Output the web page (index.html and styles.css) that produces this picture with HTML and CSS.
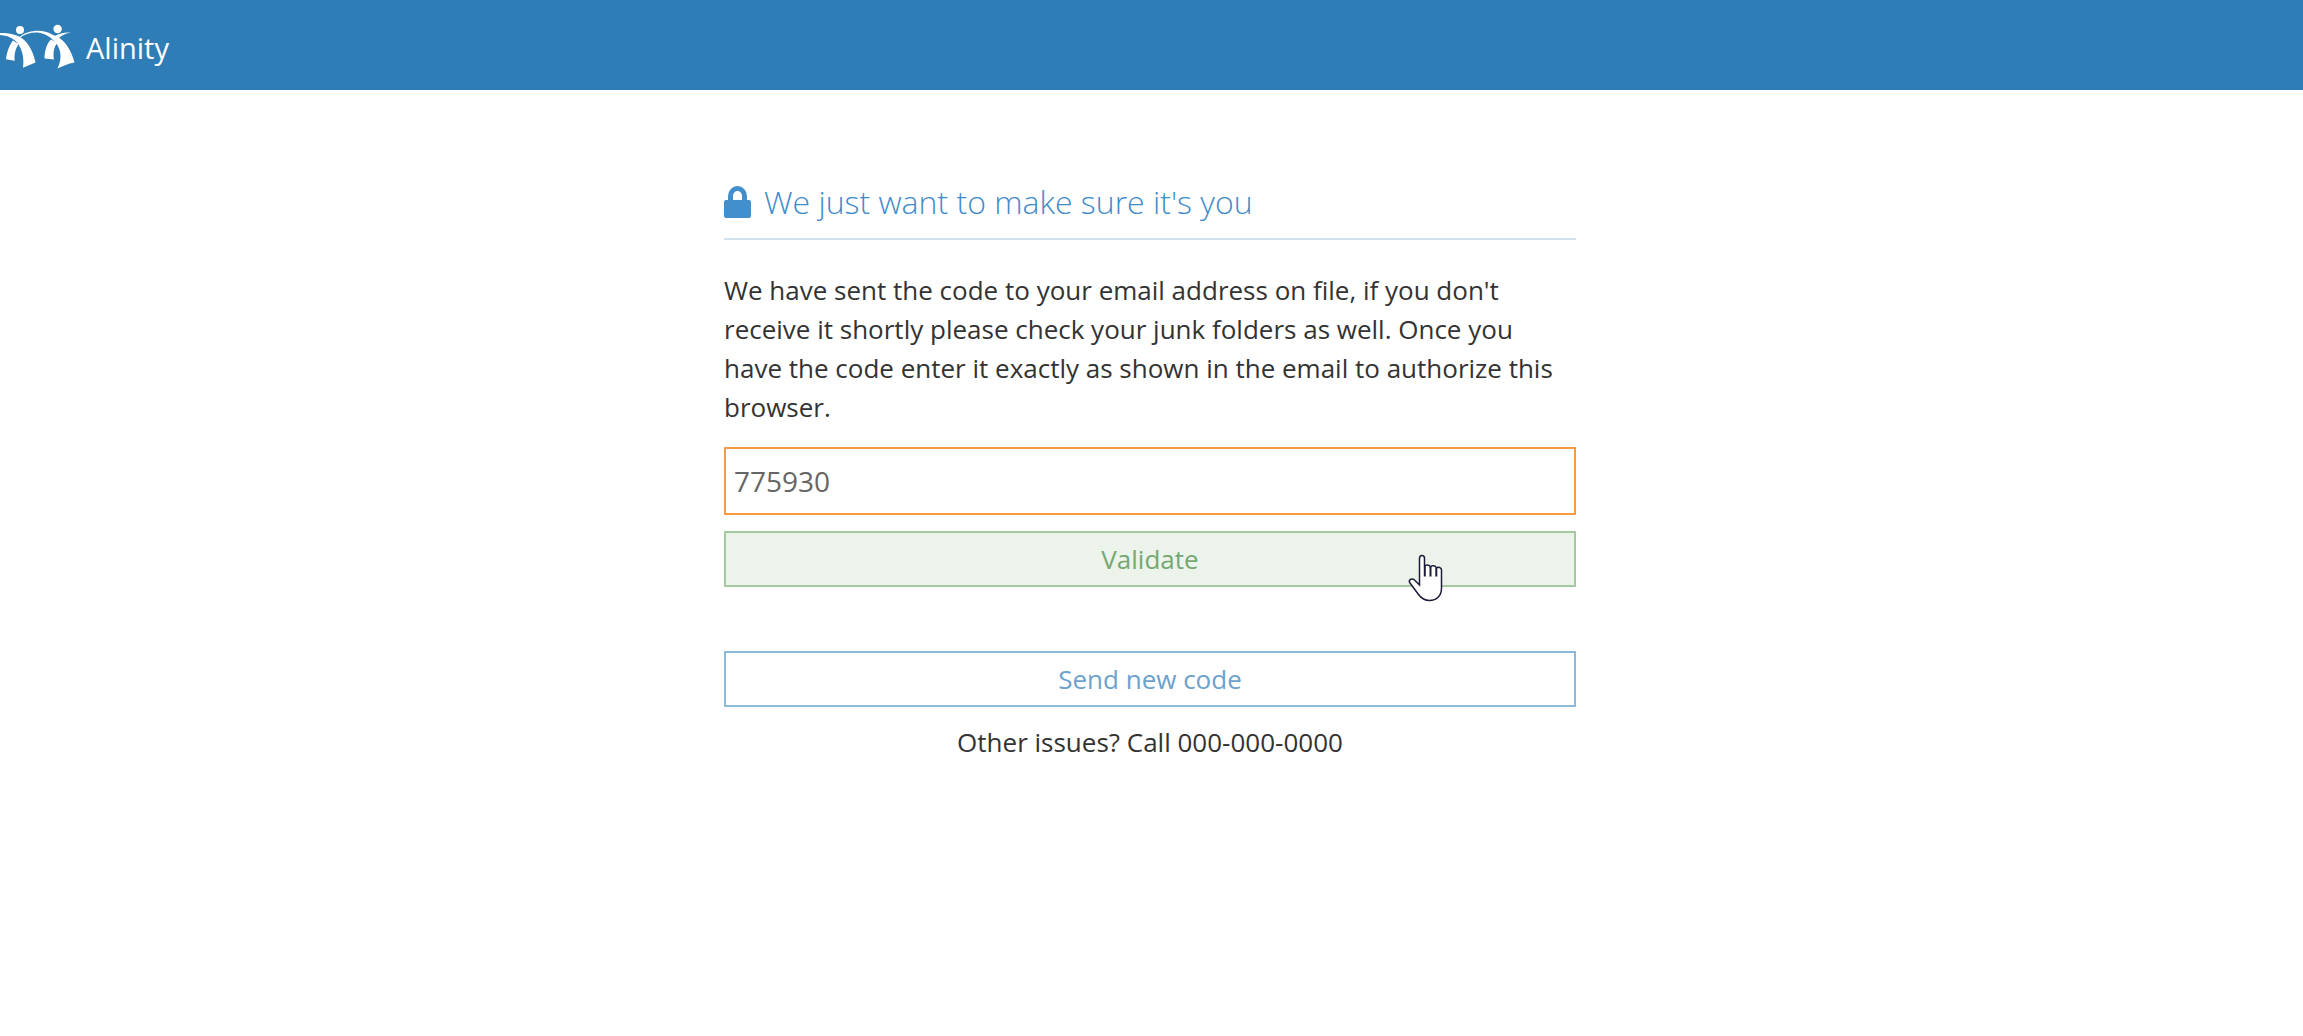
FILE: index.html
```html
<!DOCTYPE html>
<html lang="en">
<head>
    <meta charset="UTF-8">
    <meta name="viewport" content="width=device-width, initial-scale=1.0">
    <title>Alinity</title>
    <link rel="stylesheet" href="styles.css">
</head>
<body>

<header class="navbar">
    <svg class="logo" viewBox="0 0 76 48" aria-hidden="true">
        <circle cx="20" cy="7" r="4"/>
        <circle cx="57.600" cy="6" r="4.200"/>
        <path d="M0 10C6 10 12 10.500 18 13C27 17 33 27 35.500 39.500L23 44.800C24.500 34 22 24 15 17.500C10 13.500 5 12.300 0 12Z"/>
        <path d="M13 17.500L18.500 21C15.500 26 14 31 14.700 37.700L6 36.300C7 28 9.500 22 13 17.500Z"/>
        <path d="M20 13.500C28 7 43 5.500 52 11.500C64 15 71 26 74.500 39.500C68 40.500 63 43 57.500 45.500C63 34 61 24 52.500 16.500C43 7.500 31 7.500 20 14.500Z"/>
        <path d="M51 16.500L57 20C53.500 25 53 31 54 36.500L44.500 35.500C44.500 28 46.500 21 51 16.500Z"/>
        <path d="M54 13.500C59 10 65 9 71 9.500C66 10.500 62 12 59 15Z"/>
    </svg>
    <span class="brand">Alinity</span>
</header>

<main class="page">
    <form class="verify">
        <h1 class="title">
            <svg class="lock" viewBox="0 0 27 32" aria-hidden="true">
                <path fill-rule="evenodd" d="M4 14V10a9.500 10 0 0 1 19 0v4h2a2 2 0 0 1 2 2v14a2 2 0 0 1-2 2H2a2 2 0 0 1-2-2V16a2 2 0 0 1 2-2zM9 14h9V10a4.500 5 0 0 0-9 0z"/>
            </svg>
            We just want to make sure it's you
        </h1>
        <label class="message" for="code">We have sent the code to your email address on file, if you don't receive it shortly please check your junk folders as well. Once you have the code enter it exactly as shown in the email to authorize this browser.</label>
        <input class="code" type="text" id="code" value="775930">
        <div class="validate-row">
            <button class="btn validate" type="submit">Validate</button>
            <!-- Hand pointer over the button -->
            <svg class="pointer" viewBox="0 0 36 48" aria-hidden="true">
                <path d="M12.500 31V4.500a2.500 3 0 0 1 5 0V12.500c1-2 5-2 6 .500c1-2 5-1.500 6 1c1.500-1.500 5-.500 5 2V34c0 8-5 12.500-12 12.500c-5 0-8-2-11-6L3 29c-2-3 1-5 4-3.500z"/>
                <path d="M17.800 12v10.500M23.500 13v9.500M29.300 14v8.500" stroke-width="2"/>
            </svg>
        </div>
        <button class="btn resend" type="button">Send new code</button>
        <p class="help">Other issues? Call 000-000-0000</p>
    </form>
</main>

</body>
</html>
```
FILE: styles.css
```css
* {
    box-sizing: border-box;
}
body {
    margin: 0;
    background: #fff;
    color: #333;
    font-family: "Open Sans", sans-serif;
    font-size: 26px;
    line-height: 39px;
}
.navbar {
    display: flex;
    align-items: center;
    height: 90px;
    padding-top: 4px;
    background: #2f7db7;
    color: #fff;
}
.logo {
    width: 76px;
    height: 48px;
    fill: #fff;
}
.brand {
    margin-left: 10px;
    font-size: 29px;
}
.page {
    padding: 88px 3px 40px 0;
}
.verify {
    display: flex;
    flex-direction: column;
    max-width: 852px;
    margin: 0 auto;
}
.title {
    display: flex;
    align-items: center;
    gap: 13px;
    margin: 0 0 31px;
    padding-bottom: 12px;
    border-bottom: 2px solid #d3e1ef;
    color: #428bca;
    font-size: 32px;
    font-weight: 300;
    line-height: 48px;
}
.lock {
    width: 27px;
    height: 32px;
    fill: #428fce;
}
.message {
    margin-bottom: 20px;
}
.code {
    width: 100%;
    height: 68px;
    padding: 0 8px;
    border: 2px solid #f79a43;
    background: #fff;
    color: #666;
    font-family: inherit;
    font-size: 28px;
    outline: none;
}
.validate-row {
    position: relative;
    margin: 16px 0 64px;
}
.btn {
    display: block;
    width: 100%;
    height: 56px;
    padding: 0;
    border: 2px solid;
    border-radius: 0;
    font-family: inherit;
    font-size: 26px;
    line-height: 39px;
    cursor: pointer;
}
.validate {
    border-color: #a5c9a1;
    background: #ecf3eb;
    color: #76a872;
}
.resend {
    border-color: #8cbadb;
    background: #fff;
    color: #6ca2cd;
}
.pointer {
    position: absolute;
    top: 23px;
    right: 133px;
    width: 36px;
    height: 48px;
    fill: #fff;
    stroke: #1c1c3a;
    stroke-width: 1.5;
    pointer-events: none;
}
.help {
    margin: 16px 0 0;
    text-align: center;
}
```
